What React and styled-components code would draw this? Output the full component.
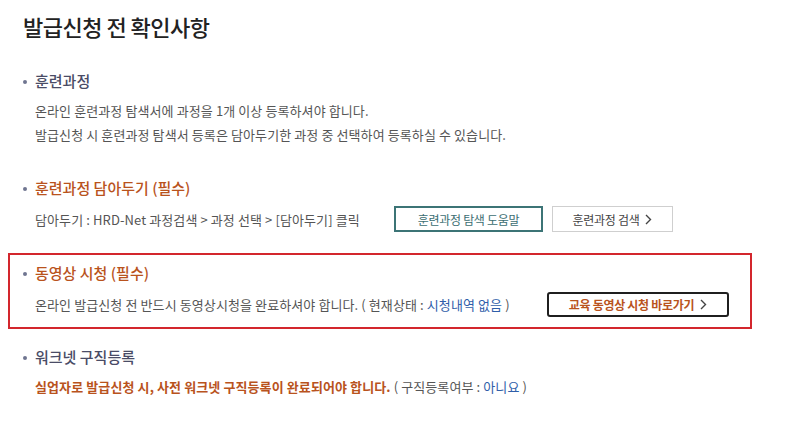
import styled, { createGlobalStyle } from "styled-components";

const GlobalStyle = createGlobalStyle`
  body {
    margin: 0;
    background: #fff;
    font-family: "Noto Sans CJK KR", "Noto Sans", sans-serif;
    color: #555;
  }
`;

const Page = styled.div`
  width: 744px;
  padding: 11px 0 0 8px;
`;

const Title = styled.h2`
  margin: 0 0 20px 15px;
  font-size: 22px;
  line-height: 30px;
  font-weight: 500;
  letter-spacing: -0.5px;
  color: #222;
`;

const List = styled.ul`
  list-style: none;
  margin: 0;
  padding: 0;
  display: flex;
  flex-direction: column;
  gap: 8px;
`;

const Section = styled.li`
  border: 2px solid ${(p) => (p.$active ? "#d3262d" : "transparent")};
  padding: 6px 12px ${(p) => (p.$active ? 10 : 11)}px 25px;
`;

const Heading = styled.h3`
  position: relative;
  margin: 0 0 6px;
  font-size: 15px;
  line-height: 24px;
  font-weight: 500;
  color: ${(p) => (p.$required ? "#b9531d" : "#4a4c66")};
  &::before {
    content: "";
    position: absolute;
    left: -12px;
    top: 11px;
    width: 4px;
    height: 4px;
    border-radius: 50%;
    background: #6f7590;
  }
`;

const Text = styled.p`
  margin: 0;
  font-size: 13px;
  line-height: 24px;
  letter-spacing: 0.1px;
  color: #555;
  h3 + & {
    margin-top: 4px;
  }
`;

const Row = styled.div`
  display: flex;
  align-items: center;
  height: 26px;
`;

const Label = styled.span`
  width: ${(p) => p.$width}px;
  flex-shrink: 0;
  font-size: 13px;
  letter-spacing: 0.1px;
  color: #555;
`;

const Link = styled.span`
  color: #2f5ea9;
`;

const Strong = styled.strong`
  font-weight: 700;
  color: #b9531d;
`;

const Button = styled.button`
  display: inline-flex;
  align-items: center;
  justify-content: center;
  gap: 6px;
  height: 26px;
  margin-right: 9px;
  padding: 0;
  background: #fff;
  font-family: inherit;
  font-size: 12px;
  letter-spacing: -0.3px;
  cursor: pointer;
  width: ${(p) => p.$width}px;
  border: 1px solid #cfcfcf;
  color: #444;
  ${(p) =>
    p.$variant === "teal" &&
    `
    border: 2px solid #3c7476;
    color: #3c6e72;
  `}
  ${(p) =>
    p.$variant === "dark" &&
    `
    height: 25px;
    border: 2px solid #1f1f1f;
    border-radius: 3px;
    color: #b9531d;
    font-weight: 700;
  `}
`;

const Chevron = () => (
  <svg width="7" height="11" viewBox="0 0 7 11" fill="none">
    <path d="M1 1l4.5 4.5L1 10" stroke="#444" strokeWidth="1.4" />
  </svg>
);

export default function App() {
  return (
    <>
      <GlobalStyle />
      <Page>
        <Title>발급신청 전 확인사항</Title>
        <List>
          <Section>
            <Heading>훈련과정</Heading>
            <Text>온라인 훈련과정 탐색서에 과정을 1개 이상 등록하셔야 합니다.</Text>
            <Text>
              발급신청 시 훈련과정 탐색서 등록은 담아두기한 과정 중 선택하여 등록하실 수 있습니다.
            </Text>
          </Section>
          <Section>
            <Heading $required>훈련과정 담아두기 (필수)</Heading>
            <Row>
              <Label $width={359}>
                담아두기 : HRD-Net 과정검색 &gt; 과정 선택 &gt; [담아두기] 클릭
              </Label>
              <Button $variant="teal" $width={149}>
                훈련과정 탐색 도움말
              </Button>
              <Button $width={121}>
                훈련과정 검색 <Chevron />
              </Button>
            </Row>
          </Section>
          <Section $active>
            <Heading $required>동영상 시청 (필수)</Heading>
            <Row>
              <Label $width={512}>
                온라인 발급신청 전 반드시 동영상시청을 완료하셔야 합니다. ( 현재상태 :{" "}
                <Link>시청내역 없음</Link> )
              </Label>
              <Button $variant="dark" $width={187}>
                교육 동영상 시청 바로가기 <Chevron />
              </Button>
            </Row>
          </Section>
          <Section>
            <Heading>워크넷 구직등록</Heading>
            <Text>
              <Strong>실업자로 발급신청 시, 사전 워크넷 구직등록이 완료되어야 합니다.</Strong> ( 구직등록여부 :{" "}
              <Link>아니요</Link> )
            </Text>
          </Section>
        </List>
      </Page>
    </>
  );
}
